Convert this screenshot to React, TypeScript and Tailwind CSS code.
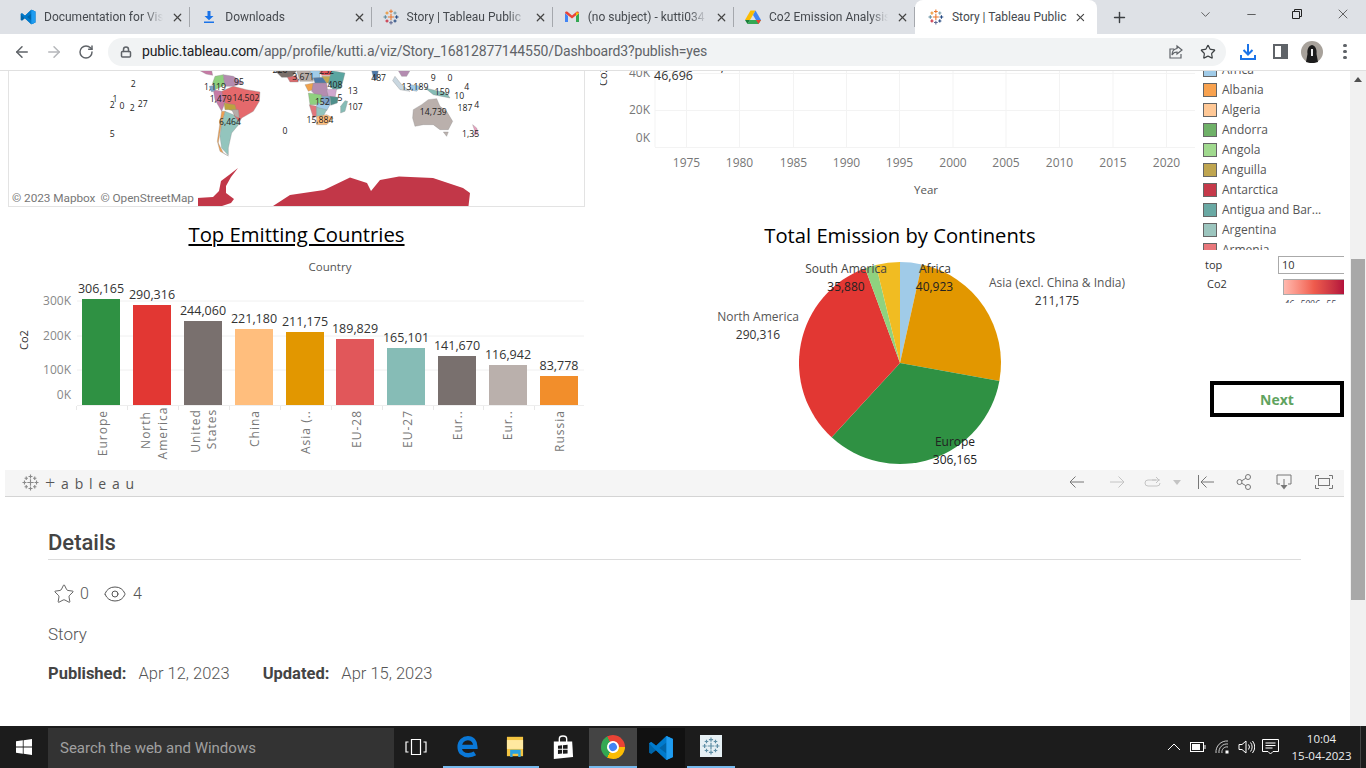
import { ArrowLeft, ArrowRight, ChevronDown, Eye, Lock, Minus, Plus, RotateCw, Star, X } from "lucide-react";

const chartFont = "font-['Open_Sans',sans-serif]";

const tabs = [
  { title: "Documentation for Vis", icon: "vscode" },
  { title: "Downloads", icon: "download" },
  { title: "Story | Tableau Public", icon: "tableau" },
  { title: "(no subject) - kutti034", icon: "gmail" },
  { title: "Co2 Emission Analysis", icon: "drive" },
];

const legend = [
  ["Africa", "#a0cbe8"],
  ["Albania", "#f8a24f"],
  ["Algeria", "#ffc896"],
  ["Andorra", "#6fb168"],
  ["Angola", "#a0d98e"],
  ["Anguilla", "#bfa550"],
  ["Antarctica", "#c5394a"],
  ["Antigua and Bar...", "#6aa9a4"],
  ["Argentina", "#9cc5be"],
  ["Armenia", "#e8777b"],
];

const bars = [
  { x: 82, top: 299, color: "#2f9143", value: "306,165" },
  { x: 133, top: 305, color: "#e23733", value: "290,316" },
  { x: 184, top: 321, color: "#79706e", value: "244,060" },
  { x: 235, top: 329, color: "#ffbe7d", value: "221,180" },
  { x: 286, top: 332, color: "#e29700", value: "211,175" },
  { x: 336, top: 339, color: "#e1575a", value: "189,829" },
  { x: 387, top: 348, color: "#86bcb6", value: "165,101" },
  { x: 438, top: 356, color: "#79706e", value: "141,670" },
  { x: 489, top: 365, color: "#bab0ac", value: "116,942" },
  { x: 540, top: 376, color: "#f28e2b", value: "83,778" },
];

const barNames: [string, number, string, number][] = [
  ["Europe", 103, "end", 410],
  ["North", 146, "middle", 430],
  ["America", 163, "middle", 433],
  ["United", 196, "middle", 431],
  ["States", 212, "middle", 429],
  ["China", 255, "end", 410],
  ["Asia (..", 306, "end", 410],
  ["EU-28", 357, "end", 410],
  ["EU-27", 408, "end", 410],
  ["Eur..", 458, "end", 410],
  ["Eur..", 508, "end", 410],
  ["Russia", 560, "end", 410],
];

const years = [
  [1975, 686.5],
  [1980, 739.5],
  [1985, 793.5],
  [1990, 846.5],
  [1995, 899.5],
  [2000, 953],
  [2005, 1006],
  [2010, 1059.5],
  [2015, 1113],
  [2020, 1166.5],
];

// map shapes are in zoomed units, the group scales them back by 3
const mapShapes: [string, string][] = [
  ["#c67aa5", "300,8 335,8 338,22 318,18"],
  ["#e5696c", "365,70 400,55 440,65 480,72 478,100 460,130 425,150 410,175 400,150 405,125 380,108 362,95"],
  ["#8fd07f", "345,25 370,20 375,50 345,65 338,45"],
  ["#b48cb0", "370,20 400,25 430,45 400,55 375,55"],
  ["#c67aa5", "340,65 365,70 375,105 365,130 345,95"],
  ["#7ba0c8", "328,55 345,52 345,68 335,72"],
  ["#bda33f", "372,105 405,110 410,130 385,125 375,125"],
  ["#b5aca8", "395,125 415,125 418,150 405,145"],
  ["#93c5bd", "375,130 400,140 420,165 395,195 385,240 385,262 365,240 360,205 365,165"],
  ["#f0a050", "365,130 375,130 365,165 358,205 355,225 370,255 385,264 360,250 352,220"],
  ["#7a6f6a", "525,8 590,8 575,28 545,28"],
  ["#d96a6d", "562,28 590,22 595,42 570,42"],
  ["#b9aea8", "590,8 640,8 640,40 600,40"],
  ["#a0cbe8", "630,8 660,8 660,30 635,30"],
  ["#4e79a7", "640,30 670,28 680,45 645,45"],
  ["#c2a84f", "665,25 695,25 695,45 680,45"],
  ["#e0555a", "660,8 700,8 695,22 665,22"],
  ["#5aa5a0", "695,8 735,15 730,35 722,62 700,65 685,45"],
  ["#f1a24c", "615,50 640,45 640,65 625,70"],
  ["#b48cb0", "640,45 680,45 685,85 650,85 635,70"],
  ["#d0a8cf", "680,65 710,62 705,90 685,85"],
  ["#8fd07f", "625,75 665,80 665,110 630,110"],
  ["#e0777c", "628,110 650,115 650,145 640,150"],
  ["#7ba0c8", "665,85 690,85 690,110 668,108"],
  ["#a0cbe8", "650,105 690,110 680,128 650,125"],
  ["#93c5bd", "650,118 680,125 670,145 650,148"],
  ["#ffbe7d", "650,145 680,140 700,150 680,170 650,170"],
  ["#4f8f8b", "690,85 715,88 712,105 692,112"],
  ["#86bcb6", "735,98 743,100 735,130 722,135 722,115"],
  ["#bab0ac", "940,125 965,110 985,95 1010,92 1020,115 1040,130 1058,160 1045,185 1020,185 1000,170 970,170 945,175 938,150"],
  ["#bab0ac", "1030,192 1045,192 1040,205"],
  ["#4e79a7", "815,8 835,8 830,35 822,35"],
  ["#b48cb0", "895,8 930,8 920,25 905,25"],
  ["#c9d7e0", "885,25 905,50 930,70 900,65 878,38"],
  ["#a0cbe8", "930,50 965,55 950,70 930,65"],
  ["#86bcb6", "975,60 1040,75 1050,90 1000,80"],
  ["#e8a0bf", "1118,170 1130,180 1135,195 1120,205 1125,190"],
];

const mapLabels: [string, number, number][] = [
  ["2", 100, 52], ["1", 45, 97], ["2", 37, 115], ["0", 66, 117], ["2", 97, 124], ["27", 128, 112], ["5", 37, 202],
  ["0", 555, 192], ["1,119", 345, 60], ["95", 417, 45], ["1,479", 362, 95], ["14,502", 438, 93], ["6,464", 390, 165],
  ["220", 540, 10], ["3,671", 610, 30], ["232", 680, 12], ["408", 705, 55], ["13", 758, 72], ["5", 720, 93],
  ["107", 766, 120], ["152", 667, 105], ["15,884", 660, 160], ["487", 836, 33], ["13,189", 945, 60], ["9", 1000, 33],
  ["0", 1050, 33], ["4", 1100, 60], ["159", 1027, 75], ["10", 1078, 87], ["187", 1095, 124], ["4", 1130, 113],
  ["14,739", 1000, 135], ["1,35", 1112, 202],
];

const pieLabels: [string, number, number, string][] = [
  ["South America", 846, 269, "#444"],
  ["35,880", 846, 287, "#222"],
  ["Africa", 935, 269, "#333"],
  ["40,923", 934.5, 287, "#222"],
  ["Asia (excl. China & India)", 1057, 283, "#555"],
  ["211,175", 1057, 301, "#333"],
  ["North America", 758, 317, "#555"],
  ["290,316", 758, 335, "#333"],
  ["Europe", 955, 442, "#222"],
  ["306,165", 955, 460, "#222"],
];

function slice(from: number, to: number) {
  const cx = 900;
  const cy = 363;
  const r = 101;
  const p = (a: number) => {
    const t = (a * Math.PI) / 180;
    return `${cx + r * Math.sin(t)} ${cy - r * Math.cos(t)}`;
  };
  return `M${cx} ${cy} L${p(from)} A${r} ${r} 0 ${to - from > 180 ? 1 : 0} 1 ${p(to)} Z`;
}

function TableauMark({ size = 16, mono }: { size?: number; mono?: string }) {
  const crosses: [number, number, number, string][] = [
    [12, 12, 4.5, "#e8762b"],
    [12, 3.5, 2.8, "#e8762b"],
    [12, 20.5, 2.8, "#5b6591"],
    [3.5, 12, 2.8, "#59879b"],
    [20.5, 12, 2.8, "#1f447e"],
    [6, 6, 2.4, "#eb912b"],
    [18, 6, 2.4, "#7099a6"],
    [6, 18, 2.4, "#c72035"],
    [18, 18, 2.4, "#1f447e"],
  ];
  return (
    <svg width={size} height={size} viewBox="0 0 24 24" fill="none" strokeWidth={1.6}>
      {crosses.map(([x, y, s, c]) => (
        <path key={`${x}-${y}`} stroke={mono ?? c} d={`M${x - s} ${y}H${x + s}M${x} ${y - s}V${y + s}`} />
      ))}
    </svg>
  );
}

function VsCodeIcon({ size = 16 }: { size?: number }) {
  return (
    <svg width={size} height={size} viewBox="0 0 24 24">
      <path fill="#0065a9" d="M17 1 7.5 10 3 6.5 1 7.6v8.8l2 1.1 4.5-3.5L17 23l6-2.6V3.6L17 1Z" />
      <path fill="#007acc" d="M17 1 7.5 10 3 6.5 1 7.6 5 12l12 11 6-2.6V3.6L17 1Zm0 6v10l-6.5-5L17 7Z" fillRule="evenodd" />
      <path fill="#1f9cf0" d="M17 1l6 2.6v16.8L17 23V1Z" />
    </svg>
  );
}

function TabIcon({ name }: { name: string }) {
  if (name === "vscode") return <VsCodeIcon />;
  if (name === "tableau") return <TableauMark />;
  if (name === "download") {
    return (
      <svg width="16" height="16" viewBox="0 0 16 16" fill="#1a73e8">
        <path d="M6.5 2h3v5h3L8 11.2 3.500 7h3V2ZM3 12.500h10V14H3z" />
      </svg>
    );
  }
  if (name === "gmail") {
    return (
      <svg width="16" height="16" viewBox="0 0 16 16">
        <path fill="#4285f4" d="M1 4v9h3V7L1 4Z" />
        <path fill="#34a853" d="M12 7v6h3V4l-3 3Z" />
        <path fill="#ea4335" d="M1 4c0-1.500 1.500-2 2.500-1.200L8 6.500l4.500-3.700C13.500 2 15 2.500 15 4l-7 5.500L1 4Z" />
        <path fill="#fbbc04" d="M12 3.300 15 4l-3 3V3.300Z" />
      </svg>
    );
  }
  return (
    <svg width="16" height="16" viewBox="0 0 16 16">
      <path fill="#fbbc04" d="M5.500 1.500h5L5 11H0L5.500 1.500Z" />
      <path fill="#34a853" d="M2.500 15 5 11h11l-2.500 4H2.500Z" />
      <path fill="#4285f4" d="M10.500 1.500 16 11h-5L8 6l2.500-4.500Z" />
      <path fill="#ea4335" d="M13.500 15 16 11h-5l2.500 4Z" />
      <path fill="#188038" d="M2.500 15 0 11h5l-2.500 4Z" />
    </svg>
  );
}

function TabStrip() {
  return (
    <div className="flex h-[34px] items-stretch bg-[#dee1e6] pl-[9px] text-[12px] text-[#45494e]">
      {tabs.map((tab) => (
        <div key={tab.title} className="flex w-[181.25px] items-center">
          <div className="flex min-w-0 flex-1 items-center gap-2 pl-[3px] pr-[5px]">
            <span className="ml-2 shrink-0">
              <TabIcon name={tab.icon} />
            </span>
            <span className="flex-1 overflow-hidden whitespace-nowrap [mask-image:linear-gradient(to_right,black_85%,transparent)]">
              {tab.title}
            </span>
            <X size={13} strokeWidth={2.2} className="shrink-0 text-[#444]" />
          </div>
          <div className="h-[20px] w-px bg-[#a5a8ad]" />
        </div>
      ))}
      <div className="flex w-[182px] items-center gap-[8px] rounded-t-lg bg-white pl-[13px] pr-[10px]">
        <TableauMark />
        <span className="flex-1 whitespace-nowrap">Story | Tableau Public</span>
        <X size={13} strokeWidth={2.2} className="text-[#444]" />
      </div>
      <div className="flex w-[44px] items-center justify-center">
        <Plus size={17} strokeWidth={2} className="text-[#3c4043]" />
      </div>
      <div className="flex flex-1 items-start justify-end text-[#333]">
        <span className="flex h-[28px] w-[46px] items-center justify-center">
          <ChevronDown size={15} strokeWidth={1.2} />
        </span>
        <span className="flex h-[28px] w-[46px] items-center justify-center">
          <Minus size={13} strokeWidth={1.4} />
        </span>
        <span className="flex h-[28px] w-[46px] items-center justify-center">
          <svg width="12" height="12" viewBox="0 0 12 12" fill="none" stroke="#222">
            <path d="M1.500 3.500h7v7h-7zM3.500 3.500v-2h7v7h-2" />
          </svg>
        </span>
        <span className="flex h-[28px] w-[46px] items-center justify-center">
          <X size={16} strokeWidth={1.1} />
        </span>
      </div>
    </div>
  );
}

function AddressBar() {
  return (
    <div className="flex h-[37px] items-center border-b border-[#e0e0e0] bg-white pb-[1px] pl-[6px] text-[#5f6368]">
      <span className="flex w-[32px] justify-center">
        <ArrowLeft size={18} strokeWidth={2} />
      </span>
      <span className="flex w-[32px] justify-center text-[#b5b7ba]">
        <ArrowRight size={18} strokeWidth={2} />
      </span>
      <span className="flex w-[32px] justify-center">
        <RotateCw size={16} strokeWidth={2.2} />
      </span>
      <div className="ml-[6px] flex h-[28px] w-[1118px] items-center rounded-full bg-[#f1f3f4] pl-[12px] pr-[10px]">
        <Lock size={12} strokeWidth={3} className="text-[#5f6368]" />
        <span className="ml-[10px] text-[14px] tracking-[-0.14px] text-[#5f6368]">
          <span className="text-[#202124]">public.tableau.com</span>/app/profile/kutti.a/viz/Story_16812877144550/Dashboard3?publish=yes
        </span>
        <span className="ml-auto flex w-[32px] justify-center">
          <svg width="16" height="16" viewBox="0 0 16 16" fill="none" stroke="#5f6368" strokeWidth="1.200">
            <path d="M13 10v4H2V5h4M9 2l5 4-5 4V8C6.500 8 5 9 4 11c0-4 2-6 5-6.500V2Z" />
          </svg>
        </span>
        <Star size={16} strokeWidth={1.8} className="ml-[8px] text-[#3c4043]" />
      </div>
      <span className="ml-[6px] flex w-[32px] justify-center">
        <svg width="18" height="18" viewBox="0 0 18 18" fill="none" stroke="#1a73e8" strokeWidth="2">
          <path d="M9 1v10M4.500 7 9 11.500 13.500 7M2 12v4h14v-4" />
        </svg>
      </span>
      <span className="flex w-[32px] justify-center">
        <span className="flex h-[15px] w-[15px] justify-end border-2 border-[#5f6368]">
          <span className="h-full w-[5px] bg-[#5f6368]" />
        </span>
      </span>
      <span className="flex w-[32px] justify-center">
        <svg width="22" height="22" viewBox="0 0 22 22">
          <circle cx="11" cy="11" r="11" fill="#a8a29b" />
          <path fill="#1c1c1c" d="M11 4C7 5 6 9 6.500 13L5 21l4 1h4l4-1-1.500-8C16 9 15 5 11 4Z" />
          <path fill="#eee" d="M10 8h2v7h-2z" />
        </svg>
      </span>
      <span className="ml-[1px] flex w-[32px] flex-col items-center gap-[2.500px]">
        <span className="h-[3.500px] w-[3.500px] rounded-full bg-[#5f6368]" />
        <span className="h-[3.500px] w-[3.500px] rounded-full bg-[#5f6368]" />
        <span className="h-[3.500px] w-[3.500px] rounded-full bg-[#5f6368]" />
      </span>
    </div>
  );
}

function MapPanel() {
  return (
    <div className="relative h-[136px] border-x border-b border-[#e3e3e3]">
      <svg width="575" height="135" viewBox="9 71 575 135" className={`block ${chartFont}`}>
        <path
          fill="#c23748"
          d="M197 198 213 197 219 191 221 181 229 175 238 168 231 177 226 186 226 193 234 199 231 203 222 206 197 206Z M273 206 290 195 324 190 350 177.500 367 183 371 191 380 180 399 176.500 433 178 463 188 470 193 468.500 206Z"
        />
        <g transform="translate(100 68) scale(0.3333)">
          {mapShapes.map(([color, points]) => (
            <polygon key={points} points={points} fill={color} stroke="#8a8a8a" strokeWidth="1" />
          ))}
          {mapLabels.map(([t, x, y]) => (
            <text key={`${t}-${x}`} x={x} y={y} dy="-3" fontSize="26" fill="#222" textAnchor="middle" dominantBaseline="central">
              {t}
            </text>
          ))}
        </g>
      </svg>
      <div className="absolute bottom-0 left-0 flex h-[15px] w-[189px] items-center gap-[5px] whitespace-nowrap bg-white pl-[3px] text-[11.800px] tracking-[-0.05px] text-[#777]">
        <span>© 2023 Mapbox</span>
        <span>© OpenStreetMap</span>
      </div>
    </div>
  );
}

function BarChart() {
  return (
    <svg width="577" height="212" viewBox="8 258 577 212" className={`block ${chartFont}`}>
      <text x="330" y="267" dy="-1" fontSize="11.500" fill="#555" textAnchor="middle" dominantBaseline="central">
        Country
      </text>
      {[301, 336, 370].map((y) => (
        <line key={y} x1="77" x2="584" y1={y} y2={y} stroke="#f0f0f0" />
      ))}
      <line x1="77" x2="584" y1="405.500" y2="405.500" stroke="#eee" />
      {[76, 127, 178, 229, 280, 331, 382, 433, 483, 534].map((x) => (
        <line key={x} x1={x + 0.5} x2={x + 0.5} y1="406" y2="410" stroke="#e8e8e8" />
      ))}
      {[["300K", 301], ["200K", 336], ["100K", 370], ["0K", 395]].map(([t, y]) => (
        <text key={t} x="71" y={y} dy="-1" fontSize="12" fill="#888" textAnchor="end" dominantBaseline="central">
          {t}
        </text>
      ))}
      <text transform="translate(24 340) rotate(-90)" dy="-1" fontSize="11" fill="#333" textAnchor="middle" dominantBaseline="central">
        Co2
      </text>
      {bars.map((b) => (
        <g key={b.value}>
          <rect x={b.x} y={b.top} width="38" height={405 - b.top} fill={b.color} />
          <text x={b.x + 19} y={b.top - 10} dy="-1" fontSize="12.500" fill="#333" textAnchor="middle" dominantBaseline="central">
            {b.value}
          </text>
        </g>
      ))}
      {barNames.map(([t, x, anchor, y]) => (
        <text
          key={`${t}-${x}`}
          transform={`translate(${x} ${y}) rotate(-90)`}
          dy="-1"
          fontSize="12"
          letterSpacing="1"
          fill="#777"
          textAnchor={anchor}
          dominantBaseline="central"
        >
          {t}
        </text>
      ))}
    </svg>
  );
}

function LineChart() {
  return (
    <svg width="595" height="130" viewBox="600 71 595 130" className={`block ${chartFont}`}>
      {years.map(([year, x]) => (
        <g key={year}>
          <line x1={x} x2={x} y1="71" y2="147" stroke="#f3f3f3" />
          <text x={x} y="163" dy="-1" fontSize="12" fill="#777" textAnchor="middle" dominantBaseline="central">
            {year}
          </text>
        </g>
      ))}
      <line x1="655" x2="655" y1="71" y2="147" stroke="#f3f3f3" />
      <line x1="655" x2="1195" y1="73.500" y2="73.500" stroke="#f3f3f3" />
      <line x1="655" x2="1195" y1="110.500" y2="110.500" stroke="#f3f3f3" />
      <line x1="655" x2="1195" y1="147.500" y2="147.500" stroke="#f3f3f3" />
      <text x="650" y="73" dy="-1" fontSize="12" fill="#777" textAnchor="end" dominantBaseline="central">40K</text>
      <text x="650" y="110" dy="-1" fontSize="12" fill="#777" textAnchor="end" dominantBaseline="central">20K</text>
      <text x="650" y="138" dy="-1" fontSize="12" fill="#777" textAnchor="end" dominantBaseline="central">0K</text>
      <text x="654" y="76" dy="-1" fontSize="12.500" fill="#333" dominantBaseline="central">46,696</text>
      <text x="707" y="66" fontSize="12" fill="#222" dominantBaseline="central">36,324</text>
      <text transform="translate(603 76) rotate(-90)" dy="-1" fontSize="11" fill="#333" textAnchor="middle" dominantBaseline="central">Co2</text>
      <text x="926" y="190" dy="-1" fontSize="11.500" fill="#555" textAnchor="middle" dominantBaseline="central">Year</text>
    </svg>
  );
}

function PieChart() {
  return (
    <svg width="595" height="212" viewBox="600 258 595 212" className={`block ${chartFont}`}>
      <path fill="#a0cbe8" d={slice(0, 12.5)} />
      <path fill="#e29700" d={slice(12.5, 100.3)} />
      <path fill="#2f9143" d={slice(100.3, 222.6)} />
      <path fill="#e23733" d={slice(222.6, 339.8)} />
      <path fill="#8fd27f" d={slice(339.8, 346.2)} />
      <path fill="#f1bc22" d={slice(346.2, 360)} />
      {pieLabels.map(([t, x, y, c]) => (
        <text key={t} x={x} y={y} dy="-1" fontSize="12" fill={c} textAnchor="middle" dominantBaseline="central">
          {t}
        </text>
      ))}
    </svg>
  );
}

function SidePanel() {
  return (
    <div className={`ml-[8px] flex w-[141px] flex-col text-[12px] ${chartFont}`}>
      <div className="h-[179px] overflow-hidden">
        <div className="-mt-[11px] flex flex-col">
          {legend.map(([name, color]) => (
            <div key={name} className="flex h-[20px] items-center gap-[5px] whitespace-nowrap text-[#555]">
              <span className="h-[14px] w-[14px] border border-[#666]" style={{ backgroundColor: color }} />
              {name}
            </div>
          ))}
        </div>
      </div>
      <div className="mt-[6px] flex h-[18px] items-center text-[#333]">
        <span className="w-[75px] pl-[2px] text-[11px]">top</span>
        <span className="h-full flex-1 border-y border-l border-[#aaa] pl-[3px] text-[11px] leading-[16px]">10</span>
      </div>
      <div className="mt-[5px] flex h-[16px] text-[11px] text-[#333]">
        <span className="w-[80px] pl-[4px] leading-[10px]">Co2</span>
        <span className="h-full flex-1 border-y border-l border-[#aaa] bg-gradient-to-r from-[#ffb8ae] via-[#ef5b4d] to-[#b3103c]" />
      </div>
      <div className="mt-[3px] flex h-[5px] gap-[6px] overflow-hidden pl-[81px] text-[9px] italic leading-[11px] text-[#445]">
        <span>46</span>
        <span>5096</span>
        <span>55</span>
      </div>
      <div className="ml-[7px] mt-[78px] flex h-[36px] w-[134px] items-center justify-center border-4 border-black text-[14px] font-bold text-[#5fa35f]">
        Next
      </div>
    </div>
  );
}

function VizToolbar() {
  return (
    <div className="ml-[5px] flex h-[27px] w-[1339px] items-center border-b border-[#d4d4d4] bg-[#f5f5f5] pb-[2px] pl-[17px] text-[#666]">
      <TableauMark size={17} mono="#8a8a8a" />
      <span className="ml-[6px] whitespace-nowrap font-['Open_Sans',sans-serif] text-[14px] leading-none tracking-[5.800px] text-[#555]">
        <span className="text-[18px] font-light">+</span>ableau
      </span>
      <span className="ml-auto flex w-[40px] justify-center">
        <svg width="16" height="12" viewBox="0 0 16 12" fill="none" stroke="#777"><path d="M15 6H1M6.500.500 1 6l5.500 5.500" /></svg>
      </span>
      <span className="flex w-[40px] justify-center">
        <svg width="16" height="12" viewBox="0 0 16 12" fill="none" stroke="#c4c4c4"><path d="M1 6h14M9.500.500 15 6l-5.500 5.500" /></svg>
      </span>
      <span className="flex w-[30px] justify-center">
        <svg width="18" height="12" viewBox="0 0 18 12" fill="none" stroke="#c4c4c4"><path d="M13 4H5a3 3 0 0 0 0 6h9a3 3 0 0 0 3-3M9 4h8M13 1l3 3-3 3" /></svg>
      </span>
      <span className="flex w-[20px] justify-center">
        <svg width="8" height="5" viewBox="0 0 8 5" fill="#c4c4c4"><path d="M0 0h8L4 5Z" /></svg>
      </span>
      <span className="flex w-[37px] justify-center">
        <svg width="16" height="14" viewBox="0 0 16 14" fill="none" stroke="#777"><path d="M.500 0v14M16 7H3M8.500 1.500 3 7l5.500 5.500" /></svg>
      </span>
      <span className="flex w-[40px] justify-center">
        <svg width="16" height="16" viewBox="0 0 16 16" fill="none" stroke="#777"><circle cx="3.500" cy="8" r="2.500" /><circle cx="12" cy="3" r="2.500" /><circle cx="12" cy="13" r="2.500" /><path d="m5.700 6.800 4.100-2.500M5.700 9.200l4.100 2.500" /></svg>
      </span>
      <span className="flex w-[40px] justify-center">
        <svg width="16" height="16" viewBox="0 0 16 16" fill="none" stroke="#777"><path d="M4 10H1V1h14v9h-3M8 5v9" /><path fill="#777" stroke="none" d="M4.500 11h7L8 15.500Z" /></svg>
      </span>
      <span className="flex w-[40px] justify-center">
        <svg width="18" height="14" viewBox="0 0 18 14" fill="none" stroke="#777"><path d="M.500 4V.500H4M14 .500h3.500V4M.500 10v3.500H4M14 13.500h3.500V10" /><rect x="3.500" y="3.500" width="11" height="7" /></svg>
      </span>
    </div>
  );
}

function Details() {
  return (
    <div className="w-[1301px] pl-[48px] text-[#555]">
      <div className="mt-[32px] border-b border-[#dcdcdc] pb-[2px] text-[22px] font-medium leading-[28px] text-[#444]">Details</div>
      <div className="mt-[22px] flex h-[24px] items-center pl-[5px] text-[16px] font-light">
        <Star size={22} strokeWidth={1} />
        <span className="ml-[5px]">0</span>
        <Eye size={24} strokeWidth={1} className="ml-[14px]" />
        <span className="ml-[6px]">4</span>
      </div>
      <div className="mt-[16px] text-[17px] font-light leading-[24px]">Story</div>
      <div className="mt-[16px] flex text-[16.500px] font-light leading-[24px]">
        <span className="font-bold text-[#444]">Published:</span>
        <span className="ml-[12px]">Apr 12, 2023</span>
        <span className="ml-[33px] font-bold text-[#444]">Updated:</span>
        <span className="ml-[12px]">Apr 15, 2023</span>
      </div>
    </div>
  );
}

function Taskbar() {
  return (
    <div className="flex h-[42px] bg-[#1c1c1c] font-['Open_Sans',sans-serif] text-white">
      <div className="flex w-[48px] items-center justify-center">
        <svg width="16" height="16" viewBox="0 0 16 16" fill="#fff">
          <path d="M0 2.300 6.800 1.300V7.600H0ZM7.600 1.200 16 0V7.600H7.600ZM0 8.400H6.800V14.700L0 13.700ZM7.600 8.400H16V16L7.600 14.800Z" />
        </svg>
      </div>
      <div className="mt-[2px] flex w-[346px] items-center bg-[#333] pl-[12px] font-['Roboto',sans-serif] text-[15px] text-[#a0a0a0]">
        Search the web and Windows
      </div>
      <div className="flex w-[44px] items-center justify-center">
        <svg width="22" height="20" viewBox="0 0 22 20" fill="none" stroke="#fff" strokeWidth="1.200">
          <path d="M6.500 2.500h9v15h-9zM3.500 5H1v10h2.500M18.500 5H21v10h-2.500" />
        </svg>
      </div>
      <div className="ml-[5px] flex w-[48px] items-center justify-center border-b-2 border-[#76b9ed]">
        <svg width="21" height="24" viewBox="0 0 24 26" fill="none">
          <path stroke="#0a78d7" strokeWidth="5" d="M3.500 14H21c0-6-3.500-10-8.500-10S3 8 3 14s4 9.500 10 9.500c3 0 5.500-.7 7.500-2" />
        </svg>
      </div>
      <div className="flex w-[48px] items-center justify-center border-b-2 border-[#76b9ed]">
        <svg width="22" height="21" viewBox="0 0 24 26">
          <path fill="#f4c542" d="M2 1h20v24H2z" />
          <path fill="#ffe9a0" d="M2 5h20v11H2z" />
          <path fill="#2aa3e0" d="M6 17h13v9h-3v-4H9v4H6z" />
        </svg>
      </div>
      <div className="flex w-[48px] items-center justify-center">
        <svg width="22" height="24" viewBox="0 0 24 26">
          <path fill="#fff" d="M2 7h20l1 17-21 2Z" />
          <path fill="none" stroke="#fff" strokeWidth="1.500" d="M8 8V4a4 3 0 0 1 8 0v4" />
          <path fill="#1c1c1c" d="M6.500 11.500 11 11v4H6.500ZM12 11l5-.5V15h-5ZM6.500 16H11v4l-4.500.5ZM12 16h5v4l-5 .4Z" />
        </svg>
      </div>
      <div className="ml-[2px] mt-[2px] flex w-[48px] items-center justify-center border-b-2 border-[#76b9ed] bg-[#444]">
        <div className="flex h-[24px] w-[24px] items-center justify-center rounded-full bg-[conic-gradient(#ea4335_0deg_120deg,#fbbc04_120deg_240deg,#34a853_240deg_360deg)] [transform:rotate(-30deg)]">
          <div className="h-[12px] w-[12px] rounded-full border-2 border-white bg-[#4285f4]" />
        </div>
      </div>
      <div className="mt-[2px] flex w-[48px] items-center justify-center bg-[#111]">
        <VsCodeIcon size={26} />
      </div>
      <div className="ml-[2px] flex w-[48px] items-center justify-center border-b-2 border-[#76b9ed]">
        <div className="flex h-[22px] w-[22px] items-center justify-center bg-[#e6f0f4]">
          <TableauMark size={18} mono="#5f8fa6" />
        </div>
      </div>
      <div className="ml-auto flex items-stretch">
        <div className="flex w-[24px] items-center justify-center">
          <svg width="14" height="8" viewBox="0 0 14 8" fill="none" stroke="#fff"><path d="m1 7 6-6 6 6" /></svg>
        </div>
        <div className="flex w-[24px] items-center justify-center">
          <svg width="16" height="10" viewBox="0 0 16 10" fill="none" stroke="#fff"><rect x=".500" y=".500" width="13" height="9" /><rect x="2" y="2" width="8" height="6" fill="#fff" stroke="none" /><path d="M15 3v4" /></svg>
        </div>
        <div className="flex w-[24px] items-center justify-center">
          <svg width="14" height="14" viewBox="0 0 14 14" fill="none" stroke="#ccc"><path d="M1 13A11 11 0 0 1 13 1M4 13a8 8 0 0 1 9-9M7 13a5 5 0 0 1 6-6" /><rect x="10.500" y="10.500" width="3" height="3" fill="#fff" stroke="none" /></svg>
        </div>
        <div className="flex w-[24px] items-center justify-center">
          <svg width="17" height="14" viewBox="0 0 17 14" fill="none" stroke="#fff"><path d="M1 4.500h3L8 1v12L4 9.500H1ZM10.500 4.500a4 4 0 0 1 0 5M12.500 2.500a7 7 0 0 1 0 9M14.500 1a10 10 0 0 1 0 12" /></svg>
        </div>
        <div className="flex w-[24px] items-center justify-center">
          <svg width="17" height="16" viewBox="0 0 17 16" fill="none" stroke="#fff"><path d="M.500.500h16v12h-5.500L8.500 15 6 12.500H.500ZM3.500 4h10M3.500 6.500h10M3.500 9h7" /></svg>
        </div>
        <div className="flex w-[79px] flex-col items-center justify-center border-r border-[#444] pl-[1px] text-[11.500px] leading-[17px] text-[#eee]">
          <span>10:04</span>
          <span>15-04-2023</span>
        </div>
        <div className="w-[5px]" />
      </div>
    </div>
  );
}

export default function App() {
  return (
    <div className="flex h-screen flex-col overflow-hidden bg-white font-['Roboto',sans-serif]">
      <TabStrip />
      <AddressBar />
      <div className="flex h-[655px]">
        <main className="w-[1350px] overflow-hidden">
          <div className="flex h-[399px]">
            <div className="ml-[8px] w-[577px]">
              <MapPanel />
              <h2 className={`h-[51px] pt-[13px] text-center text-[20.300px] leading-[28px] text-black underline underline-offset-2 ${chartFont}`}>
                Top Emitting Countries
              </h2>
              <BarChart />
            </div>
            <div className="ml-[15px] w-[595px]">
              <LineChart />
              <h2 className={`h-[57px] pl-[5px] pt-[20px] text-center text-[20.200px] leading-[28px] text-black ${chartFont}`}>
                Total Emission by Continents
              </h2>
              <PieChart />
            </div>
            <SidePanel />
          </div>
          <VizToolbar />
          <Details />
        </main>
        <div className="flex w-[16px] flex-col bg-[#f1f1f1]">
          <div className="flex h-[16px] items-center justify-center">
            <svg width="8" height="5" viewBox="0 0 8 5" fill="#505050"><path d="M4 0l4 5H0Z" /></svg>
          </div>
          <div className="mx-px mt-[172px] h-[341px] bg-[#a8a8a8]" />
        </div>
      </div>
      <Taskbar />
    </div>
  );
}
